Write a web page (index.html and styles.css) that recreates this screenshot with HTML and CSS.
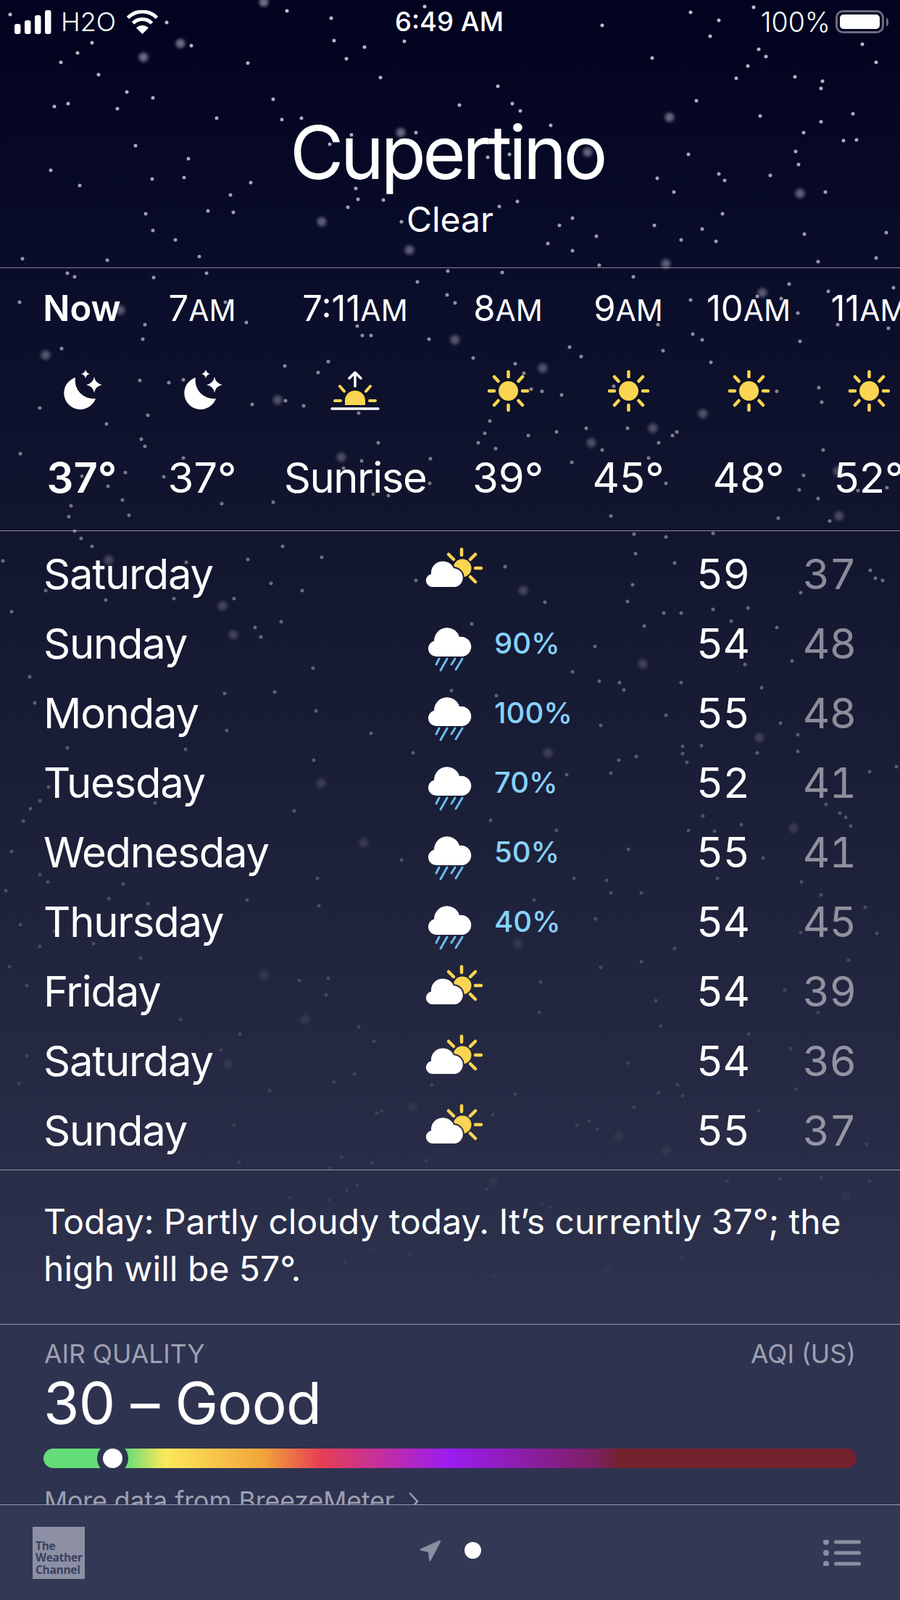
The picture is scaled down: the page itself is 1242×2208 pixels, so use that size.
FILE: index.html
```html
<!DOCTYPE html>
<html>
<head>
    <title>Weather</title>
    <link rel="stylesheet" href="styles.css">
</head>
<body>
    <svg class="defs" width="0" height="0">
        <defs>
            <mask id="partly-gap" maskUnits="userSpaceOnUse" x="0" y="0" width="84" height="80">
                <rect width="84" height="80" fill="#fff"/>
                <path d="M13 58a9 9 0 0 1-2-17.800A16.200 16.200 0 0 1 42 32.200 13 13 0 0 1 44 58z" fill="#000" stroke="#000" stroke-width="4"/>
            </mask>
        </defs>
        <symbol id="moon" viewBox="0 0 57 57" overflow="visible">
            <path d="M19 10A22.5 22.5 0 1 0 47 39 25 25 0 0 1 19 10z" fill="#fff"/>
            <path d="M45 9Q46.500 18 56 20 46.500 22 45 31 43.500 22 34 20 43.500 18 45 9z" fill="#fff"/>
            <path d="M33-1Q34 4 39 5 34 6 33 11 32 6 27 5 32 4 33-1z" fill="#fff"/>
        </symbol>
        <symbol id="sun" viewBox="0 0 57 57">
            <circle cx="28.500" cy="28.500" r="13.500" fill="#fad551"/>
            <path d="M28.500 2v7M28.500 48v7M2 28.500h7M48 28.500h7M9 9l5.500 6M48 9l-5.500 6M9 48l5.500-6M48 48l-5.500-6" stroke="#fad551" stroke-width="4.500" stroke-linecap="round" fill="none"/>
        </symbol>
        <symbol id="sunrise" viewBox="0 0 68 57">
            <path d="M20 48v-6a14 14 0 0 1 28 0v6z" fill="#fad551"/>
            <path d="M13 22l6 7M55 22l-6 7M6 42h8M54 42h8" stroke="#fad551" stroke-width="4" stroke-linecap="round" fill="none"/>
            <path d="M34 22V3M26 11l8-8 8 8M2 53h64" stroke="#fff" stroke-width="3.500" stroke-linecap="round" stroke-linejoin="round" fill="none"/>
        </symbol>
        <symbol id="partly" viewBox="0 0 84 80">
            <g mask="url(#partly-gap)">
                <circle cx="54" cy="32" r="12.500" fill="#fad551"/>
            </g>
            <path d="M53 6v8M72 32h8M65 20l7-7M65 44l7 7M35 13l7 7" stroke="#fad551" stroke-width="4.500" stroke-linecap="round" fill="none"/>
            <path d="M13 58a9 9 0 0 1-2-17.800A16.200 16.200 0 0 1 42 32.200 13 13 0 0 1 44 58z" fill="#fff"/>
        </symbol>
        <symbol id="rain" viewBox="0 0 84 80">
            <path d="M18 58a11 11 0 0 1-3-21.600A17.900 17.900 0 0 1 50 31 13.600 13.600 0 0 1 55 58z" fill="#fff"/>
            <path d="M18 69l4-8M24 77l9-16M39 69l5-8M45 76l9-15" stroke="#69bdee" stroke-width="3" stroke-linecap="round" fill="none"/>
        </symbol>
    </svg>

    <div class="screen">
        <svg class="snow" width="1242" height="1830">
            <path class="flake" d="M14 20h0M396 15h0M457 25h0M586 9h0M953 17h0M992 28h0M1040 10h0M831 35h0M980 50h0M127 59h0M107 73h0M84 86h0M136 103h0M342 87h0M478 81h0M461 56h0M503 65h0M558 57h0M900 80h0M1047 68h0M1057 78h0M1032 91h0M1190 61h0M1209 86h0M230 31h0M264 63h0M525 107h0M687 119h0M1016 108h0M1097 106h0M1133 122h0M1135 112h0M175 127h0M211 135h0M377 137h0M94 143h0M75 147h0M162 150h0M634 145h0M707 143h0M718 153h0M961 139h0M1049 160h0M1177 157h0M1133 168h0M299 163h0M389 165h0M416 163h0M760 173h0M1109 183h0M1164 194h0M1182 193h0M574 183h0M485 186h0M455 199h0M187 201h0M260 219h0M673 217h0M703 213h0M950 213h0M1098 209h0M1102 227h0M70 235h0M210 247h0M254 245h0M110 256h0M346 252h0M992 240h0M1000 249h0M1063 242h0M907 246h0M930 265h0M1139 265h0M318 269h0M491 260h0M494 275h0M529 276h0M714 278h0M480 286h0M689 285h0M287 291h0M201 295h0M322 293h0M997 295h0M554 306h0M772 311h0M790 301h0M903 311h0M969 316h0M1110 323h0M1223 321h0M211 318h0M242 331h0M823 326h0M940 331h0M988 333h0M756 336h0M790 346h0M31 357h0M148 359h0M275 354h0M1129 361h0M1209 356h0M827 366h0M93 377h0M285 377h0M618 374h0M693 376h0
            M103 382h0M212 383h0M576 389h0M617 407h0M27 417h0M311 417h0M200 448h0M340 445h0M493 450h0M500 463h0M512 463h0M592 468h0M197 468h0M85 481h0M393 505h0M453 499h0M439 514h0M193 525h0M233 528h0M253 524h0M55 563h0M394 553h0M348 558h0M419 560h0M204 573h0M147 585h0M495 570h0M195 606h0M200 616h0M28 626h0M522 611h0M253 632h0M499 636h0M594 633h0M173 652h0M113 657h0M226 658h0M149 671h0M593 667h0M515 682h0M536 684h0M169 690h0M98 698h0M306 695h0M377 693h0M95 713h0M178 711h0M474 646h0
            M628 418h0M874 382h0M1089 392h0M1045 409h0M1078 412h0M953 414h0M1143 402h0M1233 397h0M1101 432h0M908 448h0M1156 448h0M1226 453h0M956 461h0M969 469h0M1104 471h0M653 494h0M786 479h0M915 484h0M802 492h0M981 500h0M711 502h0M723 515h0M733 537h0M748 540h0M775 545h0M847 533h0M1072 540h0M1130 535h0M1134 555h0M676 581h0M669 598h0M729 601h0M768 596h0M809 591h0M866 591h0M934 596h0M928 601h0M660 611h0M909 611h0M684 619h0M831 621h0M1136 621h0M895 632h0M789 638h0M1109 656h0M919 667h0M1103 676h0M1129 688h0M1224 673h0M1184 677h0M843 712h0M1074 715h0M1145 719h0
            M103 733h0M112 743h0M127 754h0M390 754h0M342 772h0M444 769h0M4 774h0M257 776h0M374 805h0M417 815h0M63 815h0M240 826h0M146 828h0M323 826h0M16 844h0M388 858h0M352 866h0M360 879h0M432 922h0M41 934h0M310 957h0M379 955h0M48 970h0M436 981h0M313 1008h0M93 1032h0M256 1034h0M570 1039h0M433 1049h0M67 1086h0M55 1105h0M42 1116h0M406 1119h0M32 1133h0M214 1108h0M16 1175h0M875 737h0M919 741h0M984 736h0M877 764h0M931 777h0M697 782h0M574 801h0M873 807h0M1105 818h0M1201 787h0M1208 798h0M1218 801h0M752 831h0M866 830h0M984 841h0M1032 839h0M916 846h0M940 846h0M1009 857h0M651 861h0M889 864h0M1072 866h0M821 892h0M1093 912h0M1028 917h0M790 927h0M827 940h0M855 942h0M861 952h0M1051 949h0M940 942h0M623 953h0M685 960h0M919 987h0M829 1001h0M1077 998h0M512 1012h0M1101 1014h0M942 1030h0M942 1040h0M968 1029h0M1045 1039h0M1101 1037h0M878 1044h0M854 1049h0M948 1052h0M1237 1058h0M1200 1065h0M782 1069h0M843 1067h0M1140 1110h0M1159 1122h0M1167 1128h0M970 1126h0M677 1132h0M1023 1138h0M1174 1140h0M768 1146h0M950 1146h0M986 1147h0M867 1172h0M1053 1184h0M554 1187h0
            M55 1207h0M66 1217h0M170 1220h0M8 1229h0M438 1212h0M792 1212h0M837 1215h0M990 1212h0M1106 1217h0M843 1232h0M885 1232h0M1133 1235h0M341 1242h0M150 1240h0M204 1247h0M440 1250h0M737 1242h0M822 1268h0M28 1276h0M75 1285h0M1210 1288h0M1105 1287h0M1194 1252h0M55 1306h0M129 1302h0M931 1309h0M194 1322h0M885 1327h0M1171 1325h0M829 1335h0M13 1334h0M413 1353h0M453 1350h0M37 1360h0M746 1355h0M450 1373h0M905 1381h0M1083 1366h0M744 1397h0M1129 1397h0M249 1407h0M495 1417h0M912 1416h0M331 1427h0M1033 1427h0M516 1437h0M1091 1447h0M305 1449h0M37 1457h0M867 1467h0M489 1482h0M461 1493h0M26 1495h0M935 1497h0M372 1505h0M596 1497h0M711 1510h0M909 1508h0M942 1512h0M1099 1503h0M875 1528h0M1047 1533h0M527 1533h0M520 1536h0M680 1538h0M323 1553h0M813 1547h0M796 1553h0M824 1558h0M1196 1579h0M471 1597h0M588 1602h0M513 1605h0M330 1604h0M455 1612h0
            M493 1635h0M479 1643h0M672 1641h0M1004 1630h0M1077 1627h0M1133 1625h0M1200 1630h0M400 1653h0M453 1656h0M748 1661h0M760 1666h0M942 1735h0M566 1732h0M475 1742h0M515 1723h0M681 1760h0"/>
            <path class="flake-big" d="M364 3h0M249 60h0M198 79h0M924 162h0M553 183h0M811 210h0M1104 267h0M444 306h0M565 345h0M919 364h0M166 428h0M63 490h0M383 552h0M471 631h0M1052 404h0M628 469h0M749 508h0M970 571h0M901 591h0M816 611h0M1156 650h0M1158 712h0M150 773h0M722 815h0M307 836h0M322 876h0M887 916h0M443 1081h0M1048 1018h0M756 1039h0M1095 1143h0M502 1163h0M715 1302h0M364 1345h0M421 1407h0M315 1468h0M569 1528h0M854 1568h0M919 1588h0M680 1630h0M1168 1650h0M838 1753h0"/>
        </svg>

        <div class="status">
            <div class="status-left">
                <svg class="signal" width="51" height="33" viewBox="0 0 51 33">
                    <rect x="0" y="19" width="8.500" height="14" rx="3"/>
                    <rect x="14" y="14" width="8.500" height="19" rx="3"/>
                    <rect x="28" y="7" width="8.500" height="26" rx="3"/>
                    <rect x="42" y="0" width="8.500" height="33" rx="3"/>
                </svg>
                <span class="carrier">H2O</span>
                <svg class="wifi" width="45" height="33" viewBox="0 0 45 33">
                    <path d="M2.500 10.500a28 28 0 0 1 40 0M9.500 18a18 18 0 0 1 26 0" fill="none" stroke="#fff" stroke-width="5"/>
                    <path d="M22.500 33l-8.500-8.500a12 12 0 0 1 17 0z" fill="#fff"/>
                </svg>
            </div>
            <div class="status-time">6:49 AM</div>
            <div class="status-right">
                <span class="carrier">100%</span>
                <div class="battery"><div class="battery-level"></div></div>
                <div class="battery-cap"></div>
            </div>
        </div>

        <div class="hero">
            <h1 class="city">Cupertino</h1>
            <div class="condition">Clear</div>
        </div>

        <div class="hourly">
            <div class="hour hour-now">
                <div class="hour-label">Now</div>
                <svg class="hour-icon"><use href="#moon"/></svg>
                <div class="hour-temp">37°</div>
            </div>
            <div class="hour">
                <div class="hour-label">7<span class="ampm">AM</span></div>
                <svg class="hour-icon"><use href="#moon"/></svg>
                <div class="hour-temp">37°</div>
            </div>
            <div class="hour hour-wide">
                <div class="hour-label">7:11<span class="ampm">AM</span></div>
                <svg class="hour-icon hour-icon-wide"><use href="#sunrise"/></svg>
                <div class="hour-temp hour-word">Sunrise</div>
            </div>
            <div class="hour">
                <div class="hour-label">8<span class="ampm">AM</span></div>
                <svg class="hour-icon"><use href="#sun"/></svg>
                <div class="hour-temp">39°</div>
            </div>
            <div class="hour">
                <div class="hour-label">9<span class="ampm">AM</span></div>
                <svg class="hour-icon"><use href="#sun"/></svg>
                <div class="hour-temp">45°</div>
            </div>
            <div class="hour">
                <div class="hour-label">10<span class="ampm">AM</span></div>
                <svg class="hour-icon"><use href="#sun"/></svg>
                <div class="hour-temp">48°</div>
            </div>
            <div class="hour">
                <div class="hour-label">11<span class="ampm">AM</span></div>
                <svg class="hour-icon"><use href="#sun"/></svg>
                <div class="hour-temp">52°</div>
            </div>
        </div>

        <div class="days">
            <div class="day">
                <div class="day-name">Saturday</div>
                <svg class="day-icon"><use href="#partly"/></svg>
                <div class="day-rain"></div>
                <div class="day-high">59</div>
                <div class="day-low">37</div>
            </div>
            <div class="day">
                <div class="day-name">Sunday</div>
                <svg class="day-icon"><use href="#rain"/></svg>
                <div class="day-rain">90%</div>
                <div class="day-high">54</div>
                <div class="day-low">48</div>
            </div>
            <div class="day">
                <div class="day-name">Monday</div>
                <svg class="day-icon"><use href="#rain"/></svg>
                <div class="day-rain">100%</div>
                <div class="day-high">55</div>
                <div class="day-low">48</div>
            </div>
            <div class="day">
                <div class="day-name">Tuesday</div>
                <svg class="day-icon"><use href="#rain"/></svg>
                <div class="day-rain">70%</div>
                <div class="day-high">52</div>
                <div class="day-low">41</div>
            </div>
            <div class="day">
                <div class="day-name">Wednesday</div>
                <svg class="day-icon"><use href="#rain"/></svg>
                <div class="day-rain">50%</div>
                <div class="day-high">55</div>
                <div class="day-low">41</div>
            </div>
            <div class="day">
                <div class="day-name">Thursday</div>
                <svg class="day-icon"><use href="#rain"/></svg>
                <div class="day-rain">40%</div>
                <div class="day-high">54</div>
                <div class="day-low">45</div>
            </div>
            <div class="day">
                <div class="day-name">Friday</div>
                <svg class="day-icon"><use href="#partly"/></svg>
                <div class="day-rain"></div>
                <div class="day-high">54</div>
                <div class="day-low">39</div>
            </div>
            <div class="day">
                <div class="day-name">Saturday</div>
                <svg class="day-icon"><use href="#partly"/></svg>
                <div class="day-rain"></div>
                <div class="day-high">54</div>
                <div class="day-low">36</div>
            </div>
            <div class="day">
                <div class="day-name">Sunday</div>
                <svg class="day-icon"><use href="#partly"/></svg>
                <div class="day-rain"></div>
                <div class="day-high">55</div>
                <div class="day-low">37</div>
            </div>
        </div>

        <div class="summary">Today: Partly cloudy today. It’s currently 37°; the high will be 57°.</div>

        <div class="air">
            <div class="air-head">
                <span>AIR QUALITY</span>
                <span>AQI (US)</span>
            </div>
            <div class="air-value">30 – Good</div>
            <div class="air-bar"><div class="air-knob"></div></div>
            <div class="air-more">More data from BreezeMeter<svg class="air-chevron" width="14" height="26" viewBox="0 0 14 26"><path d="M2 2l10 11L2 24" fill="none" stroke="#9da0b0" stroke-width="2.500" stroke-linecap="round"/></svg></div>
        </div>

        <div class="toolbar">
            <div class="twc">The<br>Weather<br>Channel</div>
            <div class="pager">
                <svg width="30" height="30" viewBox="0 0 30 30">
                    <path d="M28 2L2 13.500l11 2.200L14.500 28z" fill="#8b8ea2" stroke="#8b8ea2" stroke-width="2.500" stroke-linejoin="round"/>
                </svg>
                <div class="pager-dot"></div>
            </div>
            <svg class="list-icon" width="52" height="36" viewBox="0 0 52 36">
                <circle cx="4" cy="3" r="4"/>
                <circle cx="4" cy="18" r="4"/>
                <circle cx="4" cy="33" r="4"/>
                <rect x="15" y="0.500" width="37" height="5" rx="2.500"/>
                <rect x="15" y="15.500" width="37" height="5" rx="2.500"/>
                <rect x="15" y="30.500" width="37" height="5" rx="2.500"/>
            </svg>
        </div>
    </div>
</body>
</html>
```

FILE: styles.css
```css
body {
    margin: 0;
    font-family: Inter, "Liberation Sans", sans-serif;
    color: #fff;
    background: #000;
}
.defs {
    position: absolute;
}
.screen {
    position: relative;
    width: 1242px;
    height: 2208px;
    overflow: hidden;
    display: flex;
    flex-direction: column;
    background: linear-gradient(#01031f 0, #0a0d2a 370px, #12152e 720px, #1e213a 1200px, #292d47 1620px, #2e3350 1830px);
}
.snow {
    position: absolute;
    top: 0;
    left: 0;
    -webkit-mask-image: linear-gradient(#000 0, rgba(0, 0, 0, 0.55) 700px, rgba(0, 0, 0, 0.28) 1200px, rgba(0, 0, 0, 0.06) 1750px);
    mask-image: linear-gradient(#000 0, rgba(0, 0, 0, 0.55) 700px, rgba(0, 0, 0, 0.28) 1200px, rgba(0, 0, 0, 0.06) 1750px);
}
.flake {
    fill: none;
    stroke: #fff;
    stroke-width: 5;
    stroke-linecap: round;
    opacity: 0.75;
    filter: blur(0.6px);
}
.flake-big {
    fill: none;
    stroke: #c8ccd8;
    stroke-width: 13;
    stroke-linecap: round;
    opacity: 0.55;
    filter: blur(2px);
}

/* status bar */
.status {
    position: relative;
    height: 60px;
    display: grid;
    grid-template-columns: 1fr auto 1fr;
    align-items: center;
    padding: 0 16px 0 20px;
}
.status-left,
.status-right {
    display: flex;
    align-items: center;
}
.status-right {
    justify-content: flex-end;
}
.signal {
    fill: #fff;
    margin: 0 13px 0 0;
}
.carrier {
    font-size: 36px;
    font-weight: 300;
}
.status-right .carrier {
    font-size: 37.500px;
}
.wifi {
    margin-left: 14px;
}
.status-time {
    padding-right: 6px;
    font-size: 36.500px;
    font-weight: 500;
}
.battery {
    margin-left: 7px;
    width: 67px;
    height: 32px;
    box-sizing: border-box;
    border: 3px solid #696b80;
    border-radius: 10px;
    padding: 3px;
}
.battery-level {
    height: 100%;
    background: #fff;
    border-radius: 5px;
}
.battery-cap {
    width: 3px;
    height: 11px;
    margin-left: 3px;
    background: #696b80;
    border-radius: 0 3px 3px 0;
}

/* city heading */
.hero {
    position: relative;
    height: 309px;
    box-sizing: border-box;
    padding-top: 90px;
    text-align: center;
}
.city {
    margin: 0;
    padding-right: 8px;
    font-size: 102px;
    font-weight: 400;
    line-height: 120px;
    letter-spacing: -4.700px;
}
.condition {
    margin-top: 4px;
    font-size: 48px;
    line-height: 58px;
}

/* hourly strip */
.hourly {
    position: relative;
    height: 363px;
    box-sizing: border-box;
    border-top: 1px solid rgba(255, 255, 255, 0.5);
    padding: 28px 0 0 30px;
    display: flex;
    overflow: hidden;
}
.hour {
    flex: 0 0 166px;
    display: flex;
    flex-direction: column;
    align-items: center;
    white-space: nowrap;
}
.hour-wide {
    flex-basis: 256px;
}
.hour-label {
    font-size: 49px;
    line-height: 56px;
}
.ampm {
    font-size: 41px;
    line-height: 1;
}
.hour-now {
    font-weight: 600;
}
.hour-icon {
    width: 57px;
    height: 57px;
    margin: 57px 0 56px;
    overflow: visible;
}
.hour-icon-wide {
    width: 68px;
}
.hour-temp {
    font-size: 58px;
    line-height: 70px;
}
.hour-word {
    letter-spacing: -1.500px;
}

/* ten day forecast */
.days {
    position: relative;
    height: 882px;
    box-sizing: border-box;
    border-top: 1px solid rgba(255, 255, 255, 0.5);
    padding: 11px 61px 0;
}
.day {
    height: 96px;
    display: grid;
    grid-template-columns: 523px 98px 1fr 76px 147px;
    align-items: center;
    font-size: 58px;
    line-height: 96px;
}
.day-name {
    margin-left: -1px;
    letter-spacing: -1.250px;
}
.day-icon {
    width: 84px;
    height: 80px;
}
.day-rain {
    font-size: 40px;
    font-weight: 500;
    color: #86d2fa;
}
.day-high,
.day-low {
    text-align: right;
    font-variant-numeric: tabular-nums;
    letter-spacing: -1px;
}
.day-low {
    color: rgba(255, 255, 255, 0.5);
}

/* text summary */
.summary {
    position: relative;
    height: 213px;
    box-sizing: border-box;
    border-top: 1px solid rgba(255, 255, 255, 0.5);
    padding: 38px 60px 0;
    font-size: 48px;
    line-height: 65px;
}

/* air quality */
.air {
    position: relative;
    flex: 1;
    min-height: 0;
    overflow: hidden;
    border-top: 1px solid rgba(255, 255, 255, 0.5);
    padding: 20px 61px 0 61px;
}
.air-head {
    display: flex;
    justify-content: space-between;
    font-size: 35.500px;
    line-height: 42px;
    color: #9da0b0;
}
.air-value {
    margin: 1px 0 0 -1px;
    font-size: 80px;
    line-height: 90px;
    letter-spacing: -0.700px;
}
.air-bar {
    position: relative;
    margin: 18px -1px 0 -1px;
    height: 27px;
    border-radius: 14px;
    overflow: hidden;
    background: linear-gradient(90deg, #64dc78 0, #64dc78 10%, #fde85a 15%, #f1a53b 27%, #e83f52 34%, #c5309a 41%, #9b1cf0 50%, #7c2060 68%, #74212e 71%, #74212e 100%);
}
.air-knob {
    position: absolute;
    top: 0;
    left: 82px;
    width: 27px;
    height: 27px;
    border-radius: 50%;
    background: #fff;
    box-shadow: 0 0 0 8px #2e3450;
}
.air-more {
    display: flex;
    margin-top: 25px;
    font-size: 35.500px;
    line-height: 42px;
    color: #9da0b0;
}
.air-chevron {
    margin: 8px 0 0 20px;
}

/* bottom toolbar */
.toolbar {
    position: relative;
    height: 132px;
    box-sizing: border-box;
    border-top: 1px solid rgba(255, 255, 255, 0.5);
    background: #323955;
    display: grid;
    grid-template-columns: 1fr auto 1fr;
    align-items: center;
    padding: 0 54px 0 45px;
}
.twc {
    width: 72px;
    height: 72px;
    box-sizing: border-box;
    background: #8d90a4;
    color: #3a4160;
    font-family: "Open Sans", sans-serif;
    font-size: 15.500px;
    font-weight: 700;
    line-height: 16.500px;
    letter-spacing: -0.300px;
    padding: 18px 0 0 4px;
    white-space: nowrap;
}
.pager {
    display: flex;
    align-items: center;
    gap: 32px;
    margin: 0 0 6px 10px;
}
.pager-dot {
    width: 23px;
    height: 23px;
    border-radius: 50%;
    background: #fff;
}
.list-icon {
    justify-self: end;
    fill: #8b8ea2;
}
```
